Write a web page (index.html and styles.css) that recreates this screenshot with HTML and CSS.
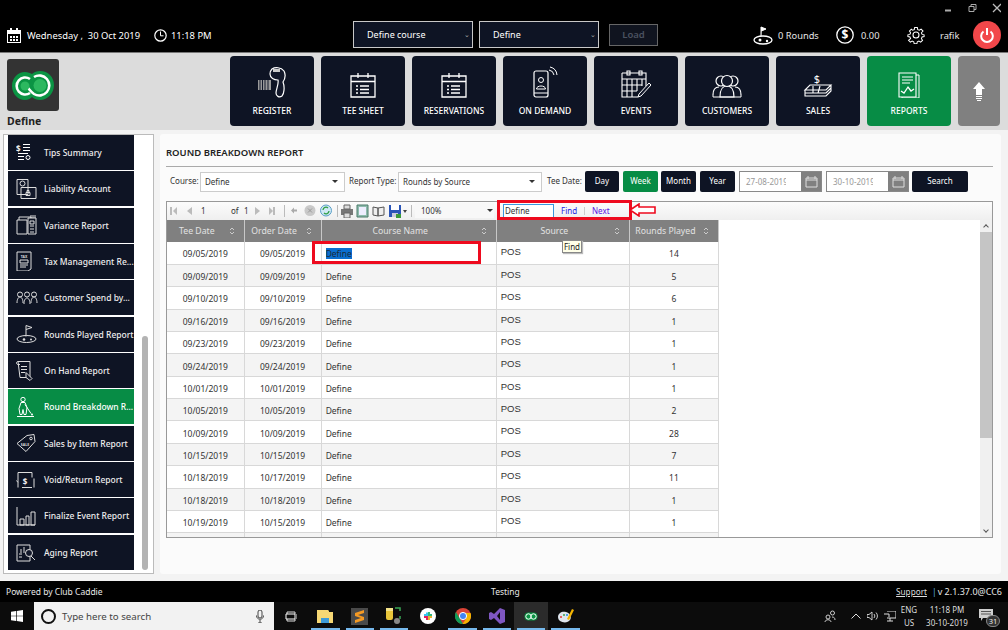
FILE: index.html
```html
<!DOCTYPE html>
<html lang="en">
<head>
<meta charset="utf-8">
<title>Round Breakdown Report</title>
<link rel="stylesheet" href="styles.css">
</head>
<body>
<div class="app">
  <header class="topbar">
    <div class="wincontrols">
      <svg width="56" height="12" viewBox="0 0 56 12"><path d="M0 7.500h6" stroke="#aaa" stroke-width="2"/><path d="M24 3.500h5v5h-5zM26 3.500v-2h5v5h-2" fill="none" stroke="#aaa"/><path d="M48 1l8 8M56 1l-8 8" stroke="#bbb" stroke-width="1.300"/></svg>
    </div>
    <div class="topmain">
      <div class="datetime">
        <svg class="ic-cal" width="14" height="15" viewBox="0 0 14 15"><path d="M0 2h3V0h2v2h4V0h2v2h3v13H0z" fill="#fff"/><path d="M1 6h12v8H1z" fill="#000"/><path d="M3 8h2v2H3zM6 8h2v2H6zM9 8h2v2H9zM3 11h2v2H3zM6 11h2v2H6zM9 11h2v2H9z" fill="#fff"/></svg>
        <span class="date">Wednesday ,&nbsp; 30 Oct 2019</span>
        <svg class="ic-clock" width="13" height="13" viewBox="0 0 13 13"><circle cx="6.500" cy="6.500" r="5.700" fill="none" stroke="#fff" stroke-width="1.200"/><path d="M6.500 2.500v4.300h3" fill="none" stroke="#fff"/></svg>
        <span class="time">11:18 PM</span>
      </div>
      <div class="pickers">
        <div class="picker p1">Define course<span class="chev">&#8964;</span></div>
        <div class="picker p2">Define<span class="chev">&#8964;</span></div>
        <div class="loadbtn">Load</div>
      </div>
      <div class="status">
        <svg class="ic-flag" width="20" height="19" viewBox="0 0 20 19"><path d="M8 12V1l5 2-4.500 2" fill="#fff" stroke="#fff"/><ellipse cx="10" cy="14" rx="9" ry="4" fill="#000" stroke="#fff" stroke-width="1.300"/><circle cx="7" cy="14" r="1.500" fill="#fff"/><circle cx="14" cy="15" r="1.200" fill="#fff"/></svg>
        <span class="rounds">0 Rounds</span>
        <svg class="ic-dollar" width="18" height="18" viewBox="0 0 18 18"><circle cx="9" cy="9" r="8.200" fill="none" stroke="#fff" stroke-width="1.300"/><text x="9" y="13" text-anchor="middle" class="svgdollar">$</text></svg>
        <span class="amount">0.00</span>
        <svg class="ic-gear" width="18" height="18" viewBox="0 0 24 24"><path d="M10 1h4l.6 3 2.400 1 2.600-1.700 2.800 2.800L20 8.700l1 2.400 3 .6v2.600l-3 .6-1 2.400 1.700 2.600-2.800 2.800-2.600-1.700-2.400 1-.6 3h-4l-.6-3-2.400-1-2.600 1.700-2.800-2.800L4 17.300l-1-2.400-3-.6v-2.600l3-.6 1-2.400-1.700-2.600 2.800-2.800L7 5l2.400-1z" transform="translate(1.200 1.200) scale(.9)" fill="none" stroke="#fff" stroke-width="1.500"/><circle cx="12" cy="12" r="4" fill="none" stroke="#fff" stroke-width="1.400"/></svg>
        <span class="user">rafik</span>
        <div class="power"><svg width="14" height="15" viewBox="0 0 14 15"><path d="M3.500 3.500a5.800 5.800 0 1 0 7 0" fill="none" stroke="#fff" stroke-width="2"/><path d="M7 0v7" stroke="#fff" stroke-width="2"/></svg></div>
      </div>
    </div>
  </header>

  <nav class="navband">
    <div class="brand">
      <div class="logo">
        <svg width="42" height="31" viewBox="0 0 42 31"><path d="M13 2c3 0 5 1 7 2 2-2 5-3 8-3 8 0 14 6 14 14s-6 15-14 15c-3 0-6-1-8-3-2 2-4 3-7 3C6 30 0 24 0 16S6 2 13 2z" fill="#0b9444"/><path d="M18 9a8.500 8.500 0 1 0 0 14" fill="none" stroke="#fff" stroke-width="2.600"/><path d="M22 7a10 10 0 1 1 0 17c-3-2-4-4-6-6" fill="none" stroke="#fff" stroke-width="2.600"/><circle cx="28" cy="15.500" r="6.500" fill="#2cb85f"/><circle cx="13" cy="16" r="4.500" fill="#2cb85f"/></svg>
      </div>
      <div class="brandname">Define</div>
    </div>
    <div class="navbtns">
      <a class="navbtn">
        <svg width="32" height="32" viewBox="0 0 32 32"><path d="M2 14h13v10H2z" fill="#9a9a9a"/><path d="M4 14v10M6.500 14v10M9 14v10M12 14v10" stroke="#12182a"/><path d="M16 3c3-2 9-2 12 2 2 4 1 8-1 11 2 5 1 12-1 14-3 2-6 0-6-3 0-4 3-9 2-13-4 0-8-2-8-6 0-2 1-4 2-5z" fill="#12182a" stroke="#fff" stroke-width="1.200"/><path d="M17 3h7v3h-7z" fill="#ccc"/></svg>
        <span>REGISTER</span>
      </a>
      <a class="navbtn">
        <svg width="26" height="26" viewBox="0 0 26 26"><path d="M1 4h24v21H1zM1 9.500h24M8 1v5M18 1v5M10 14h9M10 17.500h9M10 21h9M6 14h2M6 17.500h2M6 21h2" fill="none" stroke="#fff" stroke-width="1.300"/></svg>
        <span>TEE SHEET</span>
      </a>
      <a class="navbtn">
        <svg width="26" height="26" viewBox="0 0 26 26"><path d="M1 4h24v21H1zM1 9.500h24M8 1v5M18 1v5M10 14h9M10 17.500h9M10 21h9M6 14h2M6 17.500h2M6 21h2" fill="none" stroke="#fff" stroke-width="1.300"/></svg>
        <span>RESERVATIONS</span>
      </a>
      <a class="navbtn">
        <svg width="26" height="32" viewBox="0 0 26 32"><rect x="2" y="5" width="14" height="26" rx="2" fill="none" stroke="#fff" stroke-width="1.200"/><path d="M2 27h14" stroke="#fff"/><circle cx="9" cy="14" r="2.500" fill="none" stroke="#fff"/><path d="M4.500 23c0-4 9-4 9 0z" fill="none" stroke="#fff"/><path d="M17 4a6 6 0 0 1 5 5M18 1a9 9 0 0 1 7 8" fill="none" stroke="#fff"/></svg>
        <span>ON DEMAND</span>
      </a>
      <a class="navbtn">
        <svg width="30" height="28" viewBox="0 0 30 28"><path d="M1 3h24v13M1 3v24h16M1 9h24M6 1h3v4H6zM18 1h3v4h-3zM6 9v18M11 9v18M16 9v12M21 9v7M1 15h20M1 21h15" fill="none" stroke="#fff" stroke-width="1.100"/><path d="M28 13l2 2-10 11-3 1 1-3z" fill="#12182a" stroke="#fff"/></svg>
        <span>EVENTS</span>
      </a>
      <a class="navbtn">
        <svg width="30" height="24" viewBox="0 0 30 24"><circle cx="9" cy="7" r="5" fill="none" stroke="#fff" stroke-width="1.200"/><circle cx="21" cy="7" r="5" fill="none" stroke="#fff" stroke-width="1.200"/><path d="M1 21c0-6 3-8 6-8M29 21c0-6-3-8-6-8M8 23c0-9 3-11 7-11s7 2 7 11z" fill="#12182a" stroke="#fff" stroke-width="1.200"/><circle cx="15" cy="7" r="5.500" fill="#12182a" stroke="#fff" stroke-width="1.200"/><path d="M1 21v2h28v-2" fill="none" stroke="#fff"/></svg>
        <span>CUSTOMERS</span>
      </a>
      <a class="navbtn">
        <svg width="30" height="27" viewBox="0 0 30 27"><text x="14" y="12" text-anchor="middle" class="svgsales">$</text><path d="M7 14h21l-5 5H2zM2 19v3h21l5-5v-3M2 22v3h21l5-5v-3M10 15v7M17 15l-2 7" fill="none" stroke="#fff" stroke-width="1.100"/></svg>
        <span>SALES</span>
      </a>
      <a class="navbtn green">
        <svg width="22" height="26" viewBox="0 0 22 26"><path d="M1 1h17v24H1z" fill="none" stroke="#fff" stroke-width="1.100"/><path d="M18 3h3v23H4v-1" fill="none" stroke="#fff"/><path d="M4 5h11M4 8h11M4 11h8" stroke="#fff"/><path d="M3 19l3 2 4-6 3 4 3-2" fill="none" stroke="#fff" stroke-width="1.300"/></svg>
        <span>REPORTS</span>
      </a>
    </div>
    <div class="upbtn">
      <svg width="12" height="19" viewBox="0 0 12 19"><path d="M6 0l6 7H9v6H3V7H0z" fill="#fff"/><path d="M3 14h6v1H3zM3 16h6v1H3zM4 18h4v1H4z" fill="#fff"/></svg>
    </div>
  </nav>

  <main class="workspace">
    <aside class="sidebar">
      <div class="sidelist">
        <div class="sideitem"><svg width="18" height="19" viewBox="0 0 18 19"><text x="0" y="9" class="svgsm">$</text><path d="M7 2h7M7 5h7M7 8h7M2 11h10M2 14h6M2 17h6" stroke="#fff"/><circle cx="12" cy="15" r="2" fill="none" stroke="#fff"/></svg><span>Tips Summary</span></div>
        <div class="sideitem"><svg width="21" height="21" viewBox="0 0 21 21"><path d="M1 1h11v15H1zM5 9h15v11H5z" fill="#12182a" stroke="#ddd"/><circle cx="6.500" cy="5" r="2.500" fill="none" stroke="#ddd"/><path d="M10 17v-3h4v3zM11 14v-2h2v2" fill="none" stroke="#ddd"/></svg><span>Liability Account</span></div>
        <div class="sideitem"><svg width="21" height="20" viewBox="0 0 21 20"><path d="M1 5h10v14H1zM12 3h8v16h-8zM3 5V2h12v1M14 6h4v3h-4zM14 11h4M14 14h4M14 17h4" fill="none" stroke="#ddd"/><path d="M15 0v3M17 0v3M19 0v3" stroke="#ddd"/></svg><span>Variance Report</span></div>
        <div class="sideitem"><svg width="16" height="20" viewBox="0 0 16 20"><path d="M1 1h14v17l-3 2H1z" fill="none" stroke="#ddd"/><text x="8" y="7" text-anchor="middle" class="svgtiny">TAX</text><path d="M4 9h8v3H4zM4 14h8M4 16h6" fill="none" stroke="#ddd"/></svg><span>Tax Management Re...</span></div>
        <div class="sideitem"><svg width="22" height="14" viewBox="0 0 22 14"><circle cx="4" cy="3.500" r="2.500" fill="none" stroke="#ddd"/><circle cx="11" cy="3.500" r="2.500" fill="none" stroke="#ddd"/><circle cx="18" cy="3.500" r="2.500" fill="none" stroke="#ddd"/><path d="M1 12c0-8 6-8 6 0M8 13c0-8 6-8 6 0M15 12c0-8 6-8 6 0" fill="none" stroke="#ddd"/></svg><span>Customer Spend by...</span></div>
        <div class="sideitem"><svg width="21" height="19" viewBox="0 0 21 19"><path d="M10 12V1l6 2-6 2" fill="none" stroke="#ddd"/><ellipse cx="10.500" cy="14.500" rx="9.500" ry="3.500" fill="none" stroke="#ddd"/><circle cx="8" cy="15" r="1.300" fill="#ddd"/><circle cx="15" cy="15" r="1" fill="#ddd"/></svg><span>Rounds Played Report</span></div>
        <div class="sideitem"><svg width="20" height="21" viewBox="0 0 20 21"><path d="M2 1h12v16H4zM2 1c-2 0-2 3 0 3h2M5 6h6M5 9h6M5 12h4" fill="none" stroke="#ddd"/><path d="M10 12l6 6-2 2-4-3z" fill="#12182a" stroke="#ddd"/></svg><span>On Hand Report</span></div>
        <div class="sideitem active"><svg width="20" height="21" viewBox="0 0 20 21"><circle cx="7" cy="3" r="2.200" fill="none" stroke="#fff"/><path d="M5 6h4l2 5-1 7H8l-1-5-1 5H4l-1-6zM9 8l6 9" fill="none" stroke="#fff"/><path d="M1 20h17" stroke="#fff"/><circle cx="16" cy="18" r="1" fill="#fff"/></svg><span>Round Breakdown R...</span></div>
        <div class="sideitem"><svg width="20" height="19" viewBox="0 0 20 19"><path d="M1 10l10-8 7-1 1 7-9 10z" fill="none" stroke="#ddd"/><circle cx="15" cy="5" r="1.300" fill="none" stroke="#ddd"/><text x="9" y="12" text-anchor="middle" class="svgtiny">SALE</text></svg><span>Sales by Item Report</span></div>
        <div class="sideitem"><svg width="20" height="19" viewBox="0 0 20 19"><path d="M2 12V2h14v5M16 17H6M2 12l-1.500-2M2 17v-5M18 17V8" fill="none" stroke="#ddd"/><text x="9" y="14" text-anchor="middle" class="svgsm">$</text></svg><span>Void/Return Report</span></div>
        <div class="sideitem"><svg width="20" height="20" viewBox="0 0 20 20"><path d="M1 1v18h18M4 13h4v6H4zM10 10h3v9h-3zM15 6h4v13h-4z" fill="none" stroke="#ddd"/></svg><span>Finalize Event Report</span></div>
        <div class="sideitem"><svg width="20" height="20" viewBox="0 0 20 20"><path d="M1 3h13v16H1zM3 12h3M3 15h3M8 5v6M5 7v4M11 8v3" fill="none" stroke="#ddd"/><circle cx="13" cy="11" r="3.500" fill="#12182a" stroke="#ddd"/><path d="M15 14l4 4" stroke="#ddd"/></svg><span>Aging Report</span></div>
      </div>
      <div class="sidescroll"><div class="sidethumb"></div></div>
    </aside>

    <section class="report">
      <h1 class="title">ROUND BREAKDOWN REPORT</h1>
      <div class="filters">
        <label class="flabel l-course">Course:</label>
        <div class="select s-course">Define<i class="caret"></i></div>
        <label class="flabel l-type">Report Type:</label>
        <div class="select s-type">Rounds by Source<i class="caret"></i></div>
        <label class="flabel l-tee">Tee Date:</label>
        <div class="seg s-day">Day</div>
        <div class="seg s-week on">Week</div>
        <div class="seg s-month">Month</div>
        <div class="seg s-year">Year</div>
        <div class="datebox"><span class="dateval">27-08-2019</span><span class="datebtn"><svg width="13" height="12" viewBox="0 0 13 12"><path d="M1 2h11v9H1zM3 0v3M10 0v3M1 4h11" fill="none" stroke="#ddd"/></svg></span></div>
        <div class="datebox"><span class="dateval">30-10-2019</span><span class="datebtn"><svg width="13" height="12" viewBox="0 0 13 12"><path d="M1 2h11v9H1zM3 0v3M10 0v3M1 4h11" fill="none" stroke="#ddd"/></svg></span></div>
        <div class="searchbtn">Search</div>
      </div>

      <div class="viewer">
        <div class="rtoolbar">
          <svg class="t-first" width="24" height="10" viewBox="0 0 24 10"><path d="M0 1h2v8H0zM7 1v8L3 5zM22 1v8l-5-4z" fill="#bbb"/></svg>
          <span class="pageno">1</span>
          <span class="pageof">of</span>
          <span class="pagetotal">1</span>
          <svg class="t-last" width="20" height="10" viewBox="0 0 20 10"><path d="M0 1v8l5-4zM14 1v8l4-4zM18 1h2v8h-2z" fill="#bbb"/></svg>
          <i class="tbsep s1"></i>
          <svg class="t-nav" width="41" height="13" viewBox="0 0 41 13"><path d="M0 6.500l3-3v2h3v2H3v2z" fill="#aaa"/><circle cx="19" cy="6.500" r="5.500" fill="#c9c9c9"/><path d="M17 4.500l4 4M21 4.500l-4 4" stroke="#999"/><circle cx="35" cy="6.500" r="5.500" fill="#cfe8f5" stroke="#5a9fc7"/><path d="M32 6a3 3 0 0 1 5-2M38 7a3 3 0 0 1-5 2" fill="none" stroke="#2f9e44" stroke-width="1.300"/></svg>
          <i class="tbsep s2"></i>
          <svg class="t-tools" width="66" height="14" viewBox="0 0 66 14"><path d="M0 5h12v6H0z" fill="#777"/><path d="M3 1h6v4H3zM3 9h6v5H3z" fill="#ddd" stroke="#666"/><path d="M16 1h11v12H16z" fill="#8fbcae" stroke="#4b7a6b"/><path d="M18 3h7v8h-7z" fill="#eef"/><path d="M32 3l5 1v8l-5-1zM37 4l6-1v8l-6 1z" fill="#eee" stroke="#555"/><path d="M48 1h12v12H48z" fill="#2a55b8"/><path d="M50 1h8v5h-8z" fill="#fff"/><path d="M51 9h6v4h-6z" fill="#ccd"/><path d="M55 10h5v4h-5z" fill="#3a9a3a"/><path d="M62 6h4l-2 3z" fill="#444"/></svg>
          <i class="tbsep s3"></i>
          <div class="zoomsel">100%<i class="caret"></i></div>
          <span class="findinput">Define</span>
          <span class="findlink">Find</span>
          <i class="findsep"></i>
          <span class="findlink next">Next</span>
        </div>
        <div class="rbody">
          <div class="tablewrap">
            <table class="grid">
              <colgroup><col class="c1"><col class="c2"><col class="c3"><col class="c4"><col class="c5"></colgroup>
              <thead><tr>
                <th>Tee Date<svg class="sort" width="6" height="8" viewBox="0 0 6 8"><path d="M1 3l2-2 2 2M1 5l2 2 2-2" fill="none" stroke="#ccc"/></svg></th>
                <th>Order Date<svg class="sort" width="6" height="8" viewBox="0 0 6 8"><path d="M1 3l2-2 2 2M1 5l2 2 2-2" fill="none" stroke="#ccc"/></svg></th>
                <th>Course Name<svg class="sort" width="6" height="8" viewBox="0 0 6 8"><path d="M1 3l2-2 2 2M1 5l2 2 2-2" fill="none" stroke="#ccc"/></svg></th>
                <th>Source<svg class="sort" width="6" height="8" viewBox="0 0 6 8"><path d="M1 3l2-2 2 2M1 5l2 2 2-2" fill="none" stroke="#ccc"/></svg></th>
                <th>Rounds Played<svg class="sort" width="6" height="8" viewBox="0 0 6 8"><path d="M1 3l2-2 2 2M1 5l2 2 2-2" fill="none" stroke="#ccc"/></svg></th>
              </tr></thead>
              <tbody>
                <tr><td class="ctr">09/05/2019</td><td class="ctr">09/05/2019</td><td><mark class="hit">Define</mark></td><td class="src">POS</td><td class="ctr">14</td></tr>
                <tr><td class="ctr">09/09/2019</td><td class="ctr">09/09/2019</td><td>Define</td><td class="src">POS</td><td class="ctr">5</td></tr>
                <tr><td class="ctr">09/10/2019</td><td class="ctr">09/10/2019</td><td>Define</td><td class="src">POS</td><td class="ctr">6</td></tr>
                <tr><td class="ctr">09/16/2019</td><td class="ctr">09/16/2019</td><td>Define</td><td class="src">POS</td><td class="ctr">1</td></tr>
                <tr><td class="ctr">09/23/2019</td><td class="ctr">09/23/2019</td><td>Define</td><td class="src">POS</td><td class="ctr">1</td></tr>
                <tr><td class="ctr">09/24/2019</td><td class="ctr">09/24/2019</td><td>Define</td><td class="src">POS</td><td class="ctr">1</td></tr>
                <tr><td class="ctr">10/01/2019</td><td class="ctr">10/01/2019</td><td>Define</td><td class="src">POS</td><td class="ctr">1</td></tr>
                <tr><td class="ctr">10/05/2019</td><td class="ctr">10/05/2019</td><td>Define</td><td class="src">POS</td><td class="ctr">2</td></tr>
                <tr><td class="ctr">10/09/2019</td><td class="ctr">10/09/2019</td><td>Define</td><td class="src">POS</td><td class="ctr">28</td></tr>
                <tr><td class="ctr">10/15/2019</td><td class="ctr">10/15/2019</td><td>Define</td><td class="src">POS</td><td class="ctr">7</td></tr>
                <tr><td class="ctr">10/18/2019</td><td class="ctr">10/17/2019</td><td>Define</td><td class="src">POS</td><td class="ctr">11</td></tr>
                <tr><td class="ctr">10/18/2019</td><td class="ctr">10/18/2019</td><td>Define</td><td class="src">POS</td><td class="ctr">1</td></tr>
                <tr><td class="ctr">10/19/2019</td><td class="ctr">10/15/2019</td><td>Define</td><td class="src">POS</td><td class="ctr">1</td></tr>
                <tr class="cutrow"><td></td><td></td><td></td><td></td><td></td></tr>
              </tbody>
            </table>
          </div>
          <div class="vscroll"><i class="arrow"></i><div class="vthumb"></div><i class="arrow down"></i></div>
        </div>
        <div class="redbox rb-find"></div>
        <div class="redbox rb-cell"></div>
        <svg class="redarrow" width="27" height="14" viewBox="0 0 27 14"><path d="M1 7l9-6v3h16v6H10v3z" fill="#fff" stroke="#ee0a1e" stroke-width="1.600"/></svg>
        <div class="tooltip">Find</div>
      </div>
    </section>
  </main>

  <footer class="appfooter">
    <span class="powered">Powered by Club Caddie</span>
    <span class="testing">Testing</span>
    <u class="support">Support</u><b class="bar">|</b><span class="version">v 2.1.37.0@CC6</span>
  </footer>

  <div class="taskbar">
    <div class="startbtn"><svg width="12" height="12" viewBox="0 0 12 12"><path d="M0 1.700l5-.7v4.700H0zM5.700 1l6.300-1v5.700H5.700zM0 6.300h5V11l-5-.7zM5.700 6.300H12V12l-6.300-1z" fill="#fff"/></svg></div>
    <div class="tasksearch">
      <i class="cortana"></i>
      <span class="tasktext">Type here to search</span>
      <svg width="8" height="13" viewBox="0 0 8 13"><rect x="2" y="0" width="4" height="8" rx="2" fill="none" stroke="#444"/><path d="M.5 5.500c0 5 7 5 7 0M4 10v3M2 13h4" fill="none" stroke="#444"/></svg>
    </div>
    <div class="tray-apps">
      <div class="app-slot"><svg width="12" height="11" viewBox="0 0 12 11"><path d="M2 3V1h8v2M2 8v2h8V8" fill="none" stroke="#ddd"/><path d="M1 3h9v5H1z" fill="none" stroke="#fff"/><path d="M12 3v5" stroke="#ddd"/></svg></div>
      <div class="app-slot running"><svg width="16" height="14" viewBox="0 0 16 14"><path d="M0 1h11l1 1v1H0zM0 3h16v11H0z" fill="#f6d774"/><path d="M4 9h8v5H4z" fill="#3d9bd9"/></svg></div>
      <div class="app-slot running"><svg width="17" height="17" viewBox="0 0 17 17"><path d="M0 0h17v17H0z" fill="#4a4a4a"/><path d="M4 5l9-3v3L7 7l6 2v3l-9 3v-3l6-2-6-2z" fill="#f59a23"/></svg></div>
      <div class="app-slot running"><svg width="18" height="18" viewBox="0 0 18 18"><rect x="1" y="1" width="7" height="12" rx="2" fill="#e8c53a"/><rect x="1" y="1" width="7" height="3" fill="#f4e38a"/><path d="M10 1h5v3M15 12v-3" fill="none" stroke="#3aa655" stroke-width="1.500"/><circle cx="12" cy="14" r="3" fill="#888"/></svg></div>
      <div class="app-slot"><svg width="16" height="16" viewBox="0 0 16 16"><circle cx="8" cy="8" r="8" fill="#fff"/><path d="M4 7h3V4.500" fill="none" stroke="#36c5f0" stroke-width="2"/><path d="M9 4v3h3" fill="none" stroke="#2eb67d" stroke-width="2"/><path d="M12 9H9v3" fill="none" stroke="#ecb22e" stroke-width="2"/><path d="M7 12V9H4" fill="none" stroke="#e01e5a" stroke-width="2"/></svg></div>
      <div class="app-slot running"><svg width="16" height="16" viewBox="0 0 16 16"><circle cx="8" cy="8" r="8" fill="#db4437"/><path d="M8 16A8 8 0 0 1 1 4l4 7z" fill="#0f9d58"/><path d="M15.500 5H8l3 6-3.500 5A8 8 0 0 0 15.500 5z" fill="#f4b400"/><circle cx="8" cy="8" r="3.600" fill="#4285f4" stroke="#fff"/></svg></div>
      <div class="app-slot running"><svg width="16" height="16" viewBox="0 0 16 16"><path d="M11 0l5 2v12l-5 2-6-6-3 2-2-1V5l2-1 3 2zM11 4L8 8l3 4z" fill="#7f57c2"/></svg></div>
      <div class="app-slot active-app"><svg width="14" height="9" viewBox="0 0 14 9"><rect x=".5" y=".5" width="13" height="8" rx="4" fill="#0b9444"/><circle cx="4.500" cy="4.500" r="2.700" fill="none" stroke="#fff"/><circle cx="9.500" cy="4.500" r="2.700" fill="none" stroke="#fff"/></svg></div>
      <div class="app-slot running"><svg width="17" height="17" viewBox="0 0 17 17"><path d="M1 9c0-4 4-6 8-5 4 1 6 5 4 8-2 3-7 3-10 1-1-1-2-2-2-4z" fill="#dfe6ee"/><circle cx="4" cy="9" r="1" fill="#e53935"/><circle cx="7" cy="7" r="1" fill="#43a047"/><circle cx="10" cy="7" r="1" fill="#1e88e5"/><path d="M10 11l5-10 2 1-5 10z" fill="#f4b400"/></svg></div>
    </div>
    <div class="systray">
      <svg class="t-people" width="12" height="12" viewBox="0 0 12 12"><circle cx="4" cy="7" r="2" fill="none" stroke="#ccc"/><circle cx="8.500" cy="3" r="2" fill="none" stroke="#ccc"/><path d="M1 12c0-3 6-3 6 0M8 7c2 0 3 1 3 3" fill="none" stroke="#ccc"/></svg>
      <svg class="t-up" width="10" height="6" viewBox="0 0 10 6"><path d="M.5 5.500L5 1l4.500 4.500" fill="none" stroke="#ddd"/></svg>
      <svg class="t-vol" width="12" height="10" viewBox="0 0 12 10"><path d="M0 3.500h2L5 1v8L2 6.500H0zM7 3a3 3 0 0 1 0 4M9 1.500a5 5 0 0 1 0 7" fill="none" stroke="#ddd" stroke-width=".9"/></svg>
      <svg class="t-net" width="12" height="11" viewBox="0 0 12 11"><path d="M3 0h9v7H3M6 7v3M3 10h6M0 3h5v3" fill="none" stroke="#ddd"/></svg>
      <div class="lang"><span>ENG</span><span>US</span></div>
      <div class="clock"><span>11:18 PM</span><span>30-10-2019</span></div>
      <div class="notif"><svg width="14" height="12" viewBox="0 0 14 12"><path d="M0 0h14v9H4l-2 3V9H0z" fill="#cfcfcf"/><path d="M2 2.500h10M2 5h10" stroke="#555"/></svg><b class="badge">31</b></div>
    </div>
  </div>
</div>
</body>
</html>
```
FILE: styles.css
```css
* { box-sizing: border-box; }
html, body { margin: 0; padding: 0; }
body { width: 1008px; height: 630px; overflow: hidden; background: #f3f3f3; font-family: "Noto Sans", "Open Sans", sans-serif; color: #222; }
svg { display: block; flex: none; }
.app { display: flex; flex-direction: column; height: 630px; }

.topbar { height: 53px; background: #000; border-bottom: 1px solid #777; color: #fff; display: flex; flex-direction: column; }
.wincontrols { height: 20px; display: flex; justify-content: flex-end; padding: 3px 7px 0 0; }
.topmain { height: 32px; display: flex; align-items: flex-start; }
.datetime { display: flex; align-items: center; height: 30px; padding-left: 7px; width: 353px; font-size: 9.400px; flex: none; }
.date { margin-left: 6px; width: 127px; white-space: nowrap; }
.time { margin-left: 4px; }
.pickers { display: flex; align-items: flex-start; height: 30px; margin-top: 1px; flex: none; }
.picker { height: 27px; border: 1px solid #c8c8c8; background: #0e1424; font-size: 9px; line-height: 26px; padding-left: 13px; position: relative; }
.p1 { width: 120px; }
.p2 { width: 120px; margin-left: 6px; padding-left: 13px; }
.chev { position: absolute; right: 2px; top: 0; font-size: 7px; color: #aaa; }
.loadbtn { width: 49px; height: 22px; margin: 3px 0 0 10px; border: 1px solid #666; background: #10141f; color: #4b5260; font-size: 9.500px; font-weight: 600; text-align: center; line-height: 19px; }
.status { display: flex; align-items: center; height: 30px; margin-left: 95px; font-size: 9.300px; }
.rounds { margin-left: 5px; width: 58px; color: #e6e6e6; }
.amount { margin-left: 7px; width: 46px; color: #e6e6e6; }
.user { margin-left: 15px; width: 33px; color: #e6e6e6; }
.power { width: 28px; height: 28px; border-radius: 50%; background: #f2474a; display: flex; align-items: center; justify-content: center; }
.svgdollar { font: 700 12px "Noto Sans", sans-serif; fill: #fff; }
.svgsales { font: 400 11px "Noto Sans", sans-serif; fill: #fff; }
.svgsm { font: 700 8px "Noto Sans", sans-serif; fill: #eee; }
.svgtiny { font: 700 3.500px "Noto Sans", sans-serif; fill: #ddd; }

.navband { height: 77px; background: #dcdcdc; display: flex; padding: 3px 8px 0 7px; }
.brand { width: 223px; }
.logo { width: 52px; height: 52px; margin-top: 3px; background: #333; border-radius: 3px; display: flex; align-items: center; justify-content: center; }
.brandname { font-size: 10.500px; font-weight: 700; color: #222; line-height: 14px; margin-top: 3px; }
.navbtns { display: flex; gap: 7px; width: 721px; }
.navbtn { width: 84px; height: 70px; background: #0e1424; border-radius: 4px; color: #fff; display: flex; flex-direction: column; justify-content: flex-end; align-items: center; font-size: 8.500px; font-weight: 500; position: relative; padding-bottom: 28px; }
.navbtn span { position: absolute; bottom: 9px; white-space: nowrap; line-height: 12px; }
.navbtn.green { background: #078c45; }
.upbtn { width: 42px; height: 70px; background: #808080; border-radius: 4px; margin-left: 7px; display: flex; align-items: center; justify-content: center; }

.workspace { height: 452px; display: flex; padding: 4px 7px 7px 3px; background: #f3f3f3; }
.sidebar { width: 151px; border: 1px solid #bbb; background: #fff; display: flex; padding-left: 4px; overflow: hidden; }
.sidelist { width: 126px; display: flex; flex-direction: column; gap: 1.360px; }
.sideitem { height: 35px; flex: none; background: #0e1424; color: #eee; display: flex; align-items: center; font-size: 8.500px; font-weight: 500; position: relative; padding-left: 36px; white-space: nowrap; }
.sideitem svg { position: absolute; left: 8px; top: 50%; transform: translateY(-50%); }
.sideitem.active { background: #078c45; color: #fff; }
.sidescroll { width: 8px; margin-left: 7px; position: relative; }
.sidethumb { position: absolute; left: 1px; top: 201px; bottom: 3px; width: 6px; border-radius: 3px; background: #b3b3b3; }

.report { width: 841px; margin-left: 6px; background: #fbfbfb; border-radius: 3px; padding: 0 0 0 6px; display: flex; flex-direction: column; }
.title { margin: 12px 0 0; width: 827px; padding-bottom: 7px; border-bottom: 1px solid #aaa; font-size: 9.500px; font-weight: 600; color: #222; line-height: 13px; }
.filters { display: flex; align-items: center; height: 30px; font-size: 8px; color: #333; flex: none; }
.flabel { white-space: nowrap; flex: none; padding-bottom: 2px; }
.l-course { margin-left: 4px; width: 30px; }
.l-type { margin-left: 4px; width: 49px; }
.l-tee { margin-left: 5px; width: 38px; }
.select { height: 20px; border: 1px solid #ccc; background: #fff; line-height: 17px; padding-left: 4px; position: relative; color: #333; flex: none; }
.s-course { width: 145px; }
.s-type { width: 144px; }
.caret { position: absolute; right: 6px; top: 7px; width: 0; height: 0; border-left: 3px solid transparent; border-right: 3px solid transparent; border-top: 3px solid #333; }
.seg { height: 21px; background: #0e1424; color: #fff; border-radius: 2px; text-align: center; line-height: 20px; flex: none; }
.s-day { width: 34px; }
.s-week { width: 35px; margin-left: 4px; }
.s-month { width: 35px; margin-left: 3px; }
.s-year { width: 35px; margin-left: 4px; }
.seg.on { background: #078c45; }
.datebox { width: 83px; height: 21px; border: 1px solid #888; display: flex; margin-left: 4px; background: #fff; flex: none; }
.dateval { width: 46px; overflow: hidden; white-space: nowrap; padding-left: 6px; line-height: 19px; color: #999; }
.datebtn { width: 20px; margin-left: auto; background: #808080; display: flex; align-items: center; justify-content: center; }
.searchbtn { width: 56px; height: 21px; margin-left: 3px; background: #0e1424; color: #fff; border-radius: 2px; text-align: center; line-height: 20px; flex: none; }

.viewer { width: 827px; height: 337px; border: 1px solid #999; margin-top: 4px; display: flex; flex-direction: column; position: relative; background: #fff; }
.rtoolbar { height: 18px; background: linear-gradient(#fcfcfc, #efefef); display: flex; align-items: center; font-size: 8px; color: #333; padding-left: 3px; flex: none; }
.pageno { width: 30px; margin-left: 7px; flex: none; }
.pageof { width: 13px; flex: none; }
.pagetotal { width: 9px; flex: none; }
.t-last { margin-left: 2px; }
.tbsep { width: 1px; height: 12px; background: #bbb; flex: none; }
.s1 { margin-left: 9px; }
.t-nav { margin-left: 6px; }
.s2 { margin-left: 5px; }
.t-tools { margin-left: 3px; }
.s3 { margin-left: 4px; }
.zoomsel { width: 79px; height: 15px; margin-left: 3px; padding-left: 6px; line-height: 15px; position: relative; flex: none; background: #f8f8f8; }
.zoomsel .caret { right: 1px; top: 6px; }
.findinput { width: 51px; height: 14px; margin-left: 9px; border: 1px solid #3a96dd; background: #fff; line-height: 12px; padding-left: 1px; color: #333; flex: none; }
.findlink { margin-left: 7px; color: #1a1ae6; width: 16px; flex: none; }
.findsep { width: 1px; height: 8px; background: #ccc; margin-left: 7px; flex: none; }
.findlink.next { margin-left: 7px; color: #5a10e0; }

.rbody { flex: 1; display: flex; min-height: 0; }
.tablewrap { flex: 1; overflow: hidden; background: #fff; }
.grid { border-collapse: collapse; table-layout: fixed; width: 552px; }
.c1, .c2 { width: 77px; }
.c3 { width: 175px; }
.c4 { width: 133px; }
.c5 { width: 89px; }
.grid th { height: 22px; background: #808080; color: #e2e2e2; font-size: 8.700px; font-weight: 400; border-right: 1px solid #c8c8c8; position: relative; padding: 0 17px 0 0; white-space: nowrap; }
.sort { position: absolute; right: 9px; top: 7px; }
.grid td { height: 22.400px; padding: 2px 4px 0; font-size: 8.500px; color: #333; border-right: 1px solid #d8d8d8; border-bottom: 1px solid #d8d8d8; }
.grid tbody tr:nth-child(even) td { background: #f4f4f4; }
.grid td.ctr { text-align: center; }
.grid td.src { font-family: "Liberation Sans", sans-serif; font-size: 9.500px; vertical-align: top; padding-top: 4px; }
.hit { background: #0a6fd0; color: #1a2a3a; }
.vscroll { width: 12px; flex: none; background: #f0f0f0; position: relative; }
.arrow { position: absolute; left: 4px; top: 5px; width: 4px; height: 4px; border-left: 1px solid #555; border-top: 1px solid #555; transform: rotate(45deg); }
.arrow.down { top: auto; bottom: 5px; transform: rotate(225deg); }
.vthumb { position: absolute; left: 0; right: 0; top: 12px; height: 206px; background: #c5c5c5; }

.redbox { position: absolute; border: 3px solid #ee0a1e; pointer-events: none; }
.rb-find { left: 330px; top: -2px; width: 135px; height: 20px; }
.rb-cell { left: 145px; top: 39px; width: 169px; height: 23px; }
.redarrow { position: absolute; left: 462px; top: 1px; }
.tooltip { position: absolute; left: 395px; top: 38px; height: 13px; width: 20px; text-align: center; background: #ffffe8; border: 1px solid #888; font-size: 8px; line-height: 11px; color: #222; box-shadow: 1px 1px 1px #bbb; }

.appfooter { height: 21px; background: #000; color: #e8e8e8; font-size: 8.500px; display: flex; align-items: center; padding: 0 6px 0 6px; flex: none; }
.powered { width: 485px; }
.testing { flex: 1; }
.support { color: #ddd; font-size: 8.200px; }
.bar { font-weight: 400; color: #5aa9e6; margin: 0 1px 0 5px; }
.version { font-size: 9px; white-space: nowrap; }

.taskbar { height: 28px; background: #0c0c0c; display: flex; align-items: stretch; flex: none; }
.startbtn { width: 34px; display: flex; align-items: center; justify-content: center; }
.tasksearch { width: 240px; background: #f2f2f2; display: flex; align-items: center; padding: 0 10px 0 7px; font-size: 9.700px; color: #444; }
.cortana { width: 15px; height: 15px; border: 2px solid #111; border-radius: 50%; flex: none; }
.tasktext { margin-left: 6px; flex: 1; }
.tray-apps { display: flex; width: 309px; flex: none; }
.app-slot { width: 34.300px; display: flex; align-items: center; justify-content: center; position: relative; flex: none; }
.app-slot.running::after, .app-slot.active-app::after { content: ""; position: absolute; left: 3px; right: 3px; bottom: 0; height: 2px; background: #76b9ed; }
.app-slot.active-app { background: #2b2b2b; }
.systray { flex: 1; display: flex; align-items: center; color: #ddd; font-size: 8px; padding-left: 241px; white-space: nowrap; }
.t-up { margin-left: 15px; }
.t-vol { margin-left: 6px; }
.t-net { margin-left: 5px; }
.lang, .clock { display: flex; flex-direction: column; align-items: center; line-height: 13px; flex: none; }
.lang { margin-left: 5px; width: 16px; }
.clock { margin-left: 9px; width: 42px; }
.notif { position: relative; width: 24px; height: 24px; margin-left: 9px; padding: 5px 0 0 2px; flex: none; }
.badge { position: absolute; right: 1px; bottom: 1px; width: 14px; height: 12px; background: #333; border: 1px solid #888; border-radius: 6px; color: #eee; font-size: 7.500px; line-height: 10px; text-align: center; font-weight: 400; }
```
